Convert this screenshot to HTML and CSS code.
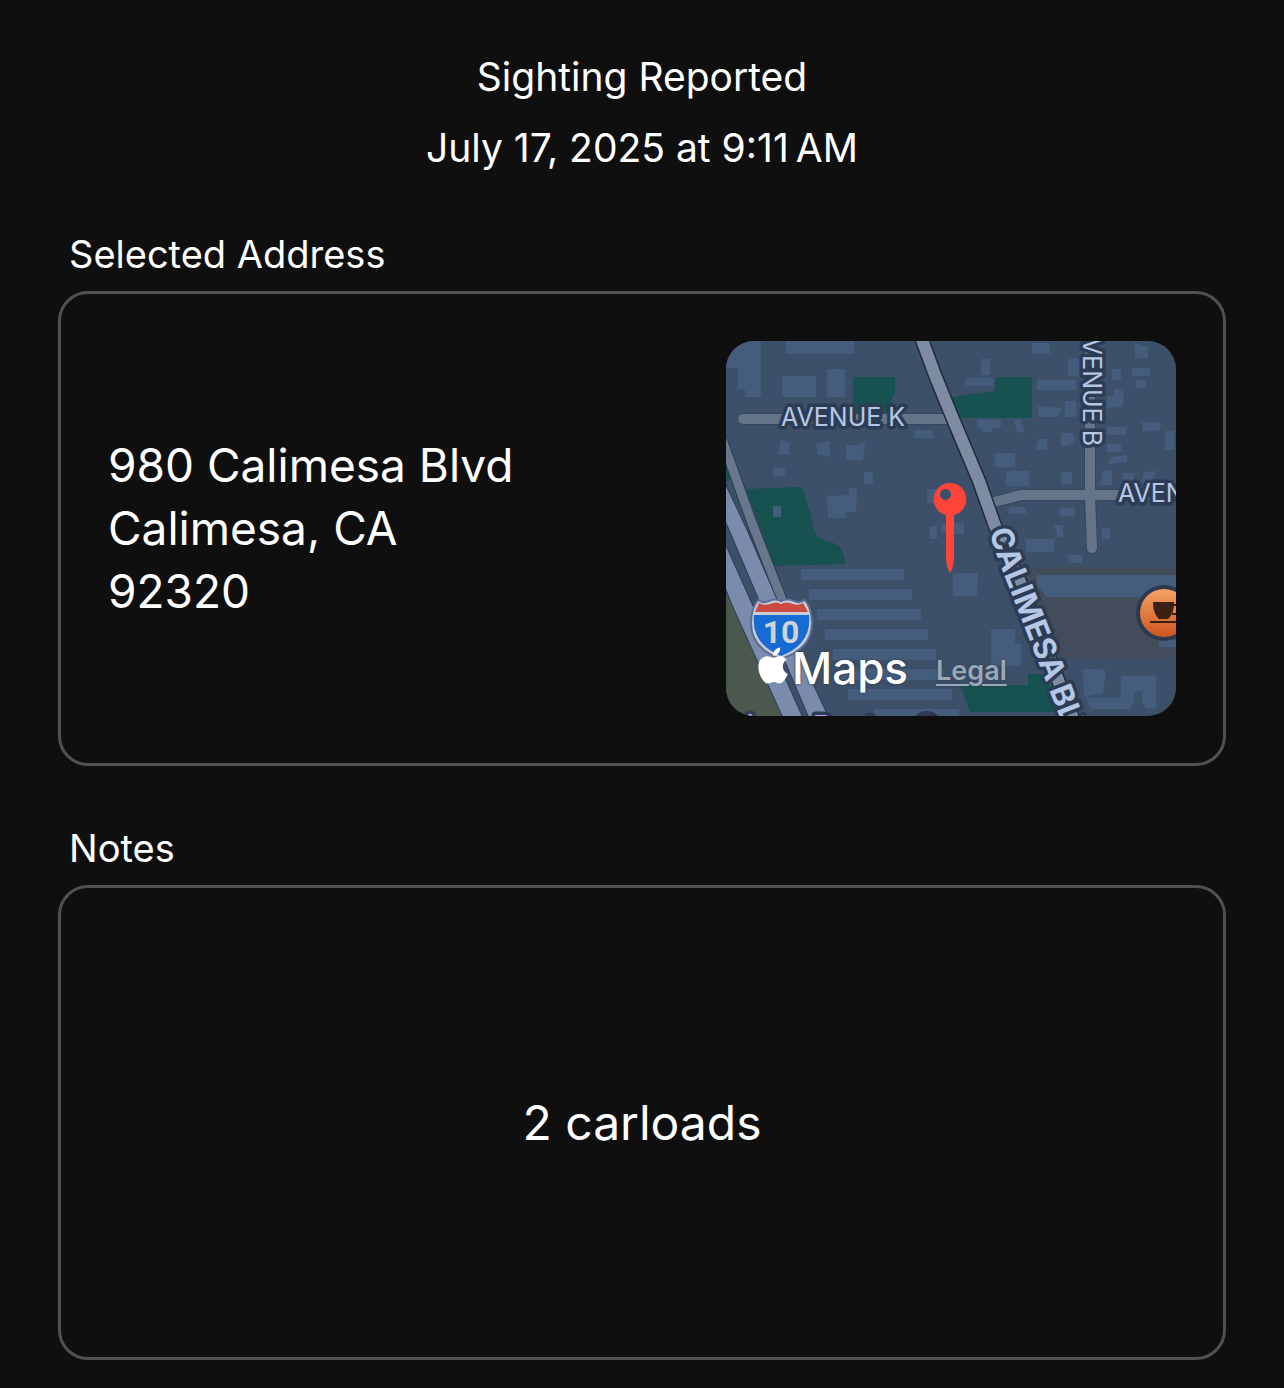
FILE: index.html
```html
<!DOCTYPE html>
<html lang="en">
<head>
    <meta charset="UTF-8">
    <meta name="viewport" content="width=device-width, initial-scale=1.0">
    <title>Sighting Reported</title>
    <link rel="stylesheet" href="styles.css">
</head>
<body>
    <main class="report">
        <header class="report-header">
            <h1 class="title">Sighting Reported</h1>
            <time class="date" datetime="2025-07-17T09:11">July 17, 2025 at 9:11&#8239;AM</time>
        </header>

        <section class="section">
            <h2 class="label">Selected Address</h2>
            <div class="card address-card">
                <address class="address">
                    980 Calimesa Blvd<br>
                    Calimesa, CA<br>
                    92320
                </address>
                <div class="map">
                    <svg class="map-canvas" viewBox="0 0 450 375" role="img" aria-label="Map">
                        <defs>
                            <linearGradient id="cafe" x1="0" y1="0" x2="0" y2="1">
                                <stop offset="0" stop-color="#f2a265"/>
                                <stop offset="1" stop-color="#d0551f"/>
                            </linearGradient>
                            <path id="blvd" d="M263 190Q273 222 283 246L343 400"/>
                        </defs>

                        <!-- ground -->
                        <rect width="450" height="375" fill="#3c5069"/>
                        <path fill="#424c5a" d="M296 226H450V317H334z"/>

                        <!-- parks -->
                        <g fill="#175150">
                            <path d="M127 36H169V54H166V72H127z"/>
                            <path d="M226 56L269 50V36H306V77H233z"/>
                            <path d="M20 148L73 146Q76 146 77 149L85 174Q87 190 91 194Q95 199 103 201Q112 202 116 209Q119 215 119 223L48 225z"/>
                            <path d="M234 344H302V333H320L334 371H244z"/>
                            <path d="M0 118L7 137L0 141z"/>
                        </g>
                        <path fill="#4b584d" d="M0 254Q5 260 8 267L58 375H0z"/>

                        <!-- buildings -->
                        <g fill="#455d7d">
                            <path d="M0 0H35V56H19V48H12V27H0z"/>
                            <path d="M60 0h68v13h-68zM56 35h34v21h-34zM101 28h18v28h-18zM188 89h18l2 8h-20z"/>
                            <path d="M55 99L64 102L63 114L52 113zM90 103L104 100V116L92 113zM120 104H131L139 100L137 119H120z"/>
                            <path d="M47 127h12v8h-12zM138 131h9v12h-9zM47 165h8v11h-8zM201 148h9v14h-9z"/>
                            <path d="M101 155L123 154V147H131L130 171H120V177H102z"/>
                            <path d="M204 185h7v13h-8zM215 183h5v-1h18v11h-18v-1h-5z"/>
                            <path d="M306 2h18v11h-18zM255 18h9v16h-9zM240 37h27v8h-27zM311 39h39v10h-39zM342 18h11v17h-11z"/>
                            <path d="M312 65L336 67L332 76H312zM339 60h11v16h-11zM251 78L275 79V86L266 87V91H257L251 85z"/>
                            <path d="M288 79L294 78L298 90L291 92zM313 98H321V109H309zM335 92H347L349 102L335 106z"/>
                            <path d="M269 112h20v14h-20zM280 130h23v15h-23zM335 131h11v12h-11zM283 166h17v7h-17zM334 167h15v8h-15z"/>
                            <path d="M406 1L422 6V17H409V6zM386 28h9v11h-9zM406 27h18v8h-18zM409 39h12l-1 8h-10z"/>
                            <path d="M388 48H398L397 66L381 67V56L387 55zM416 81h18l0 8l-17 2zM381 86h19v8h-19zM439 90h9v19h-9zM381 103h14v8h-14z"/>
                            <path d="M385 116L401 114V121L382 123zM377 129H386V144H374zM397 132h11v10h-11zM418 131L431 130L425 142H416z"/>
                            <path d="M376 187h8v11h-8zM328 184H337V196H332zM300 198h28v13h-28zM342 214h14v8h-13z"/>
                            <path d="M311 234H450V256H321L311 245zM227 232h25l-1 23h-24z"/>
                            <path d="M265 288H289V303H295V325H265z"/>
                            <path d="M357 328H376L380 332L377 352L358 356zM360 357H395V335H430V367H421L416 361V350H408V361L403 368H365z"/>
                            <path d="M433 299h17v7h-17z"/>
                            <path d="M75 228h103v11h-103zM83 248h103v11h-103zM91 268h104v11h-104zM99 288h103v11h-103zM107 308h103v11h-103zM114 328h104v11h-104zM122 348h104v11h-104zM148 368h85v7h-85z"/>
                        </g>

                        <!-- side streets -->
                        <g class="street-edge">
                            <path d="M17 78H222"/>
                            <path d="M364 0V155L366 207"/>
                            <path d="M268 161L295 154H450"/>
                        </g>
                        <g class="street">
                            <path d="M17 78H222"/>
                            <path d="M364 0V155L366 207"/>
                            <path d="M268 161L295 154H450"/>
                        </g>

                        <!-- freeway -->
                        <path class="ramp-edge" d="M-4 98L26 182L58 264"/>
                        <path class="ramp" d="M-4 98L26 182L58 264"/>
                        <g fill="#7a8bab" stroke="#2a3a50">
                            <path d="M-2 140L21 189L50 256L74 315L103 377H83L1 184L-2 178z"/>
                            <path d="M-2 200L77 377H57L6 264L-2 244z"/>
                        </g>

                        <!-- boulevard -->
                        <path class="blvd-edge" d="M195 -4L209 34L222 66L253 140L269 185L294 241L348 380"/>
                        <path class="blvd" d="M195 -4L209 34L222 66L253 140L269 185L294 241L348 380"/>

                        <!-- street names -->
                        <g class="street-name">
                            <text x="55" y="85">AVENUE K</text>
                            <text x="392" y="161">AVENUE</text>
                            <text transform="translate(357 105) rotate(90)" text-anchor="end">AVENUE B</text>
                        </g>
                        <text class="blvd-name"><textPath href="#blvd">CALIMESA BLVD</textPath></text>
                        <circle cx="201" cy="386" r="16" fill="#2b3850"/>
                        <text class="place-name" x="20" y="395">inea Rest</text>

                        <!-- interstate shield -->
                        <path d="M32 259Q38 263 43 260Q49 257 55 260Q62 257 68 260Q73 263 79 259Q86 268 86 282C86 299 76 311 55 318C35 311 25 299 25 282Q25 268 32 259z" fill="#c9ccd4" stroke="#596f98" stroke-width="2"/>
                        <path d="M33 262Q39 265 44 263Q50 260 55 263Q61 260 67 263Q72 265 77 262L82 271H29z" fill="#c94b42"/>
                        <path d="M28 274H83Q86 303 55 315Q25 303 28 274z" fill="#176bd2"/>
                        <text class="shield-number" x="55" y="302">10</text>

                        <!-- cafe -->
                        <circle cx="438" cy="272" r="28" fill="#2b3850"/>
                        <circle cx="438" cy="272" r="24" fill="url(#cafe)"/>
                        <path d="M427 261H448Q448 273 442 278H433Q427 273 427 261z" fill="#3a2112"/>
                        <path d="M447 264H454V273H446M424 281H452" fill="none" stroke="#3a2112" stroke-width="2"/>

                        <!-- pin -->
                        <path fill="#ff453a" fill-rule="evenodd" d="M224 142a16.300 16.300 0 0 1 4 32.100V214Q228 226 224 232Q220 226 220 214V174.100A16.300 16.300 0 0 1 224 142zM219.500 148a5.500 5.500 0 1 0 .01 0z"/>
                    </svg>
                    <div class="map-credit">
                        <svg class="apple" viewBox="2 0 20 24" aria-hidden="true">
                            <path fill="#fff" d="M12.152 6.896c-.948 0-2.415-1.078-3.960-1.040-2.040.027-3.910 1.183-4.961 3.014-2.117 3.675-.546 9.103 1.519 12.090 1.013 1.454 2.208 3.090 3.792 3.039 1.520-.065 2.090-.987 3.935-.987 1.831 0 2.350.987 3.960.948 1.637-.026 2.676-1.480 3.676-2.948 1.156-1.688 1.636-3.325 1.662-3.415-.039-.013-3.182-1.221-3.220-4.857-.026-3.040 2.480-4.494 2.597-4.559-1.429-2.090-3.623-2.324-4.390-2.376-2-.156-3.675 1.090-4.610 1.090zM15.530 3.830c.843-1.012 1.400-2.427 1.245-3.830-1.207.052-2.662.805-3.532 1.818-.780.896-1.454 2.338-1.273 3.714 1.338.104 2.715-.688 3.559-1.701"/>
                        </svg>
                        <span class="brand">Maps</span>
                        <a class="legal" href="#">Legal</a>
                    </div>
                </div>
            </div>
        </section>

        <section class="section">
            <h2 class="label">Notes</h2>
            <div class="card notes-card">
                <p class="notes">2 carloads</p>
            </div>
        </section>
    </main>
</body>
</html>
```

FILE: styles.css
```css
* {
    box-sizing: border-box;
}
body {
    margin: 0;
    font-family: Inter, "Liberation Sans", sans-serif;
    background-color: #0f0f0f;
    color: white;
}
h1, h2, p {
    margin: 0;
    font-weight: 400;
}
.report {
    padding: 53px 58px 26px;
}
.report-header {
    display: flex;
    flex-direction: column;
    align-items: center;
    gap: 23px;
}
.title,
.date {
    font-size: 39px;
    line-height: 48px;
}
.section {
    margin-top: 58px;
}
.label {
    padding-left: 11px;
    font-size: 38px;
    line-height: 48px;
}
.card {
    display: flex;
    align-items: center;
    min-height: 475px;
    margin-top: 13px;
    padding: 45px 47px;
    border: 3px solid #505052;
    border-radius: 30px;
}
.address-card {
    justify-content: space-between;
}
.address {
    font-style: normal;
    font-size: 46px;
    line-height: 63px;
}
.notes-card {
    justify-content: center;
}
.notes {
    font-size: 48px;
    line-height: 63px;
}

/* Map */
.map {
    position: relative;
    width: 450px;
    border-radius: 28px;
    overflow: hidden;
}
.map-canvas {
    display: block;
    width: 100%;
}
.street,
.street-edge,
.ramp,
.ramp-edge,
.blvd,
.blvd-edge {
    fill: none;
    stroke-linecap: round;
}
.street {
    stroke: #667489;
    stroke-width: 10px;
}
.street-edge {
    stroke: #35465e;
    stroke-width: 12px;
}
.ramp {
    stroke: #69778d;
    stroke-width: 9px;
}
.ramp-edge {
    stroke: #2a3a50;
    stroke-width: 11px;
}
.blvd {
    stroke: #7e8ca3;
    stroke-width: 12px;
}
.blvd-edge {
    stroke: #1f2a39;
    stroke-width: 15px;
}
.street-name,
.blvd-name,
.place-name {
    fill: #b6c7e6;
    stroke: #2c3c54;
    stroke-width: 7px;
    stroke-linejoin: round;
    paint-order: stroke;
}
.street-name {
    font-size: 25px;
}
.blvd-name {
    font-size: 31px;
    font-weight: 700;
}
.place-name {
    fill: #c49bf5;
    font-size: 29px;
    font-weight: 700;
}
.shield-number {
    fill: #d0d2d8;
    font-family: Roboto, sans-serif;
    font-size: 32px;
    font-weight: 700;
    text-anchor: middle;
}
.map-credit {
    position: absolute;
    left: 32px;
    bottom: 24px;
    display: flex;
    align-items: center;
}
.apple {
    width: 30px;
    height: 37px;
    margin-right: 4px;
    margin-bottom: 6px;
}
.brand {
    font-size: 44px;
    font-weight: 500;
    line-height: 48px;
    text-shadow: 0 0 3px #2c3c54;
}
.legal {
    margin-left: 28px;
    padding-top: 6px;
    color: #9ba8b8;
    font-size: 27px;
    font-weight: 600;
    line-height: 34px;
    text-decoration-thickness: 2px;
    text-underline-offset: 4px;
    text-shadow: 0 0 3px #2c3c54;
}
```
